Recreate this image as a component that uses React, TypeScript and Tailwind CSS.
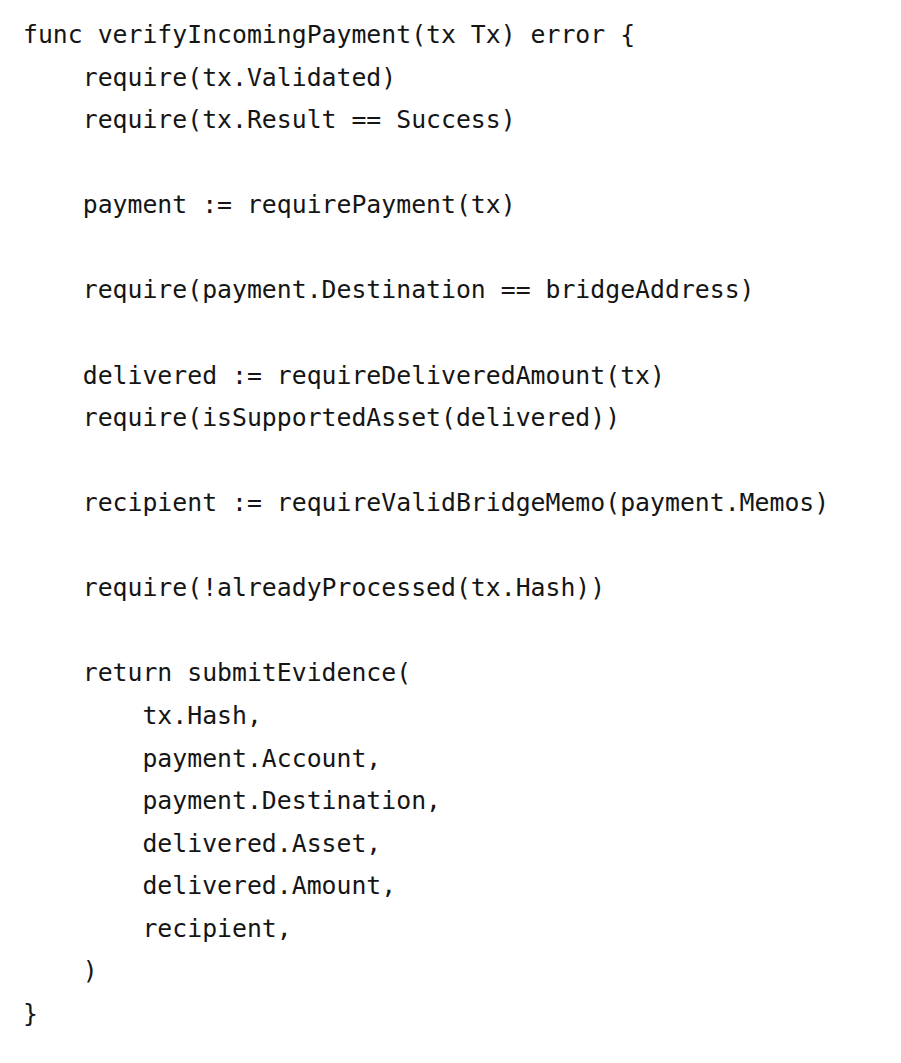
const lines = [
  "func verifyIncomingPayment(tx Tx) error {",
  "    require(tx.Validated)",
  "    require(tx.Result == Success)",
  "",
  "    payment := requirePayment(tx)",
  "",
  "    require(payment.Destination == bridgeAddress)",
  "",
  "    delivered := requireDeliveredAmount(tx)",
  "    require(isSupportedAsset(delivered))",
  "",
  "    recipient := requireValidBridgeMemo(payment.Memos)",
  "",
  "    require(!alreadyProcessed(tx.Hash))",
  "",
  "    return submitEvidence(",
  "        tx.Hash,",
  "        payment.Account,",
  "        payment.Destination,",
  "        delivered.Asset,",
  "        delivered.Amount,",
  "        recipient,",
  "    )",
  "}",
];

export default function App() {
  return (
    <div className="h-[1063px] w-[901px] overflow-hidden bg-white">
      <pre className="pl-[23px] pt-[14px] font-['DejaVu_Sans_Mono',monospace] text-[24.8px] leading-[42.57px] text-[#151515]">
        {lines.map((line, i) => (
          <div key={i} className="h-[42.57px] whitespace-pre">
            {line}
          </div>
        ))}
      </pre>
    </div>
  );
}
